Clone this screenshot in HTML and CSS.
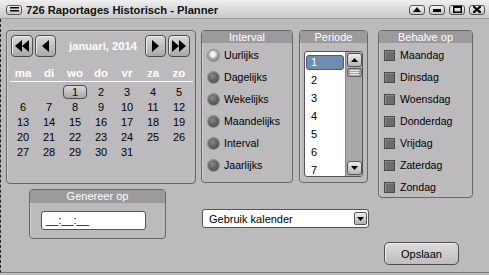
FILE: index.html
```html
<!DOCTYPE html>
<html>
<head>
<meta charset="utf-8">
<link rel="stylesheet" href="styles.css">
</head>
<body>
<div class="window">
  <div class="titlebar">
    <span class="tbtn"><svg width="9" height="5" viewBox="0 0 9 5"><rect x="0" y="0" width="9" height="1.5" fill="#000"/><rect x="0" y="3" width="9" height="1.5" fill="#000"/></svg></span>
    <span class="title">726 Raportages Historisch - Planner</span>
    <span class="tright">
      <span class="tbtn"><svg width="8" height="5" viewBox="0 0 8 5"><path d="M0 5 L4 0 L8 5 Z" fill="#000"/></svg></span>
      <span class="tbtn"><svg width="8" height="5" viewBox="0 0 8 5"><rect x="0" y="2" width="8" height="3" fill="#000"/></svg></span>
      <span class="tbtn"><svg width="9" height="7" viewBox="0 0 9 7"><rect x="0.75" y="0.75" width="7.5" height="5.5" fill="none" stroke="#000" stroke-width="1.5"/><rect x="0" y="0" width="9" height="2" fill="#000"/></svg></span>
      <span class="tbtn"><svg width="8" height="7" viewBox="0 0 8 7"><path d="M0 0 L8 7 M8 0 L0 7" stroke="#000" stroke-width="2.2"/></svg></span>
    </span>
  </div>
  <div class="content">
    <div class="col col-left">
      <div class="panel calendar">
        <div class="cal-nav">
          <span class="navbtn"><svg width="14" height="12" viewBox="0 0 14 12"><path d="M7 0 L0 6 L7 12 Z M14 0 L7 6 L14 12 Z" fill="#000"/></svg></span>
          <span class="navbtn small"><svg width="7" height="12" viewBox="0 0 7 12"><path d="M7 0 L0 6 L7 12 Z" fill="#000"/></svg></span>
          <span class="month">januari, 2014</span>
          <span class="navbtn small"><svg width="7" height="12" viewBox="0 0 7 12"><path d="M0 0 L7 6 L0 12 Z" fill="#000"/></svg></span>
          <span class="navbtn"><svg width="14" height="12" viewBox="0 0 14 12"><path d="M0 0 L7 6 L0 12 Z M7 0 L14 6 L7 12 Z" fill="#000"/></svg></span>
        </div>
        <div class="cal-head">
          <span>ma</span><span>di</span><span>wo</span><span>do</span><span>vr</span><span>za</span><span>zo</span>
        </div>
        <div class="cal-grid">
          <span></span><span></span><span class="sel">1</span><span>2</span><span>3</span><span>4</span><span>5</span>
          <span>6</span><span>7</span><span>8</span><span>9</span><span>10</span><span>11</span><span>12</span>
          <span>13</span><span>14</span><span>15</span><span>16</span><span>17</span><span>18</span><span>19</span>
          <span>20</span><span>21</span><span>22</span><span>23</span><span>24</span><span>25</span><span>26</span>
          <span>27</span><span>28</span><span>29</span><span>30</span><span>31</span>
        </div>
      </div>
      <div class="panel genereer">
        <div class="phead">Genereer op</div>
        <div class="timeinput">__:__:__</div>
      </div>
    </div>
    <div class="col col-mid">
      <div class="midrow">
        <div class="panel interval">
          <div class="phead">Interval</div>
          <div class="opt"><span class="radio on"></span>Uurlijks</div>
          <div class="opt"><span class="radio"></span>Dagelijks</div>
          <div class="opt"><span class="radio"></span>Wekelijks</div>
          <div class="opt"><span class="radio"></span>Maandelijks</div>
          <div class="opt"><span class="radio"></span>Interval</div>
          <div class="opt"><span class="radio"></span>Jaarlijks</div>
        </div>
        <div class="panel periode">
          <div class="phead">Periode</div>
          <div class="listbox">
            <div class="items">
              <div class="item"><span class="isel">1</span></div>
              <div class="item">2</div>
              <div class="item">3</div>
              <div class="item">4</div>
              <div class="item">5</div>
              <div class="item">6</div>
              <div class="item">7</div>
            </div>
            <div class="scrollbar">
              <span class="sbtn"><svg width="7" height="4" viewBox="0 0 7 4"><path d="M0 4 L3.5 0 L7 4 Z" fill="#000"/></svg></span>
              <span class="thumb"><svg width="9" height="5" viewBox="0 0 9 5"><path d="M0 0.5 H9 M0 2.5 H9 M0 4.5 H9" stroke="#eee" stroke-width="1"/></svg></span>
              <span class="track"></span>
              <span class="sbtn"><svg width="7" height="4" viewBox="0 0 7 4"><path d="M0 0 L3.5 4 L7 0 Z" fill="#000"/></svg></span>
            </div>
          </div>
        </div>
      </div>
      <div class="dropdown">
        <span class="ddtext">Gebruik kalender</span>
        <span class="ddbtn"><svg width="7" height="4" viewBox="0 0 7 4"><path d="M0 0 L3.5 4 L7 0 Z" fill="#000"/></svg></span>
      </div>
    </div>
    <div class="col col-right">
      <div class="panel behalve">
        <div class="phead">Behalve op</div>
        <div class="opt"><span class="check"></span>Maandag</div>
        <div class="opt"><span class="check"></span>Dinsdag</div>
        <div class="opt"><span class="check"></span>Woensdag</div>
        <div class="opt"><span class="check"></span>Donderdag</div>
        <div class="opt"><span class="check"></span>Vrijdag</div>
        <div class="opt"><span class="check"></span>Zaterdag</div>
        <div class="opt"><span class="check"></span>Zondag</div>
      </div>
      <button class="savebtn">Opslaan</button>
    </div>
  </div>
</div>
</body>
</html>
```
FILE: styles.css
```css
* { box-sizing: border-box; }
html, body { margin: 0; padding: 0; }
body {
  background: #bcbabd;
  font-family: "Liberation Sans", Arial, sans-serif;
  font-size: 11px;
  color: #000;
}
.window {
  width: 489px;
  height: 275px;
  overflow: hidden;
  display: flex;
  flex-direction: column;
}
.titlebar {
  height: 19px;
  flex: none;
  display: flex;
  align-items: center;
  padding: 1px 4px 0 6px;
  background: linear-gradient(#efefef, #dcdcdc 50%, #c9c9c9);
  border-bottom: 1px solid #9a9a9a;
}
.title {
  font-weight: bold;
  font-size: 11.2px;
  margin-left: 4px;
  color: #111;
}
.tright { margin-left: auto; display: flex; gap: 4px; }
.tbtn {
  width: 16px;
  height: 10px;
  border: 1px solid #555;
  border-radius: 3px;
  background: linear-gradient(#f4f4f4, #c4c4c4);
  display: flex;
  align-items: center;
  justify-content: center;
}
.content {
  flex: 1;
  display: flex;
  align-items: flex-start;
  padding: 11px 0 0 6px;
  border-left: 1px dashed #222;
  border-bottom: 1px solid #7a7a7a;
  margin-bottom: 2px;
}
.col { display: flex; flex-direction: column; align-items: flex-start; }
.panel {
  border: 1px solid #686868;
  border-radius: 4px;
  box-shadow: inset 1px 1px 0 #d0ced1;
}
.phead {
  height: 12px;
  line-height: 12px;
  background: #9c9a9d;
  color: #fff;
  text-align: center;
  font-size: 11px;
  border-radius: 3px 3px 0 0;
}
/* calendar */
.calendar {
  width: 190px;
  height: 154px;
  margin-left: -1px;
  padding: 4px 3px 0 3px;
}
.cal-nav { display: flex; align-items: center; height: 22px; margin-left: 1px; }
.navbtn {
  width: 22px;
  height: 22px;
  border: 1px solid #4d4d4d;
  border-radius: 4px;
  background: linear-gradient(#d9d9d9, #a9a9a9);
  box-shadow: inset 1px 1px 0 #eee;
  display: flex;
  align-items: center;
  justify-content: center;
  margin-right: 2px;
}
.navbtn.small { width: 21px; }
.month {
  flex: 1;
  text-align: center;
  color: #fff;
  font-weight: bold;
  font-size: 11.2px;
  padding-left: 5px;
  margin-right: 2px;
}
.cal-head {
  display: grid;
  grid-template-columns: repeat(7, 26px);
  margin-top: 9px;
  height: 16px;
  line-height: 14px;
  border-bottom: 1px solid #fff;
  color: #fff;
  font-weight: bold;
  font-size: 11.5px;
  width: 183px;
  text-align: center;
}
.cal-grid {
  display: grid;
  grid-template-columns: repeat(7, 26px);
  grid-auto-rows: 15px;
  margin-top: 3px;
  text-align: center;
  font-size: 11px;
  line-height: 15px;
}
.cal-grid .sel {
  margin: 0 1px 1px 1px;
  line-height: 12px;
  border: 1px solid #4d4d4d;
  border-radius: 4px;
  background: linear-gradient(#d8d8d8, #a8a8a8);
}
/* genereer */
.genereer {
  width: 137px;
  height: 50px;
  margin: 5px 0 0 22px;
}
.genereer .phead { height: 13px; }
.timeinput {
  width: 105px;
  height: 19px;
  margin: 8px 0 0 11px;
  background: #fff;
  border: 1px solid #555;
  border-radius: 3px;
  padding: 0 0 0 4px;
  line-height: 16px;
  font-size: 11px;
}
/* mid */
.col-mid { margin-left: 5px; }
.midrow { display: flex; align-items: flex-start; }
.interval { width: 92px; height: 153px; }
.opt {
  height: 22px;
  display: flex;
  align-items: center;
  font-size: 10.6px;
}
.interval .phead + .opt, .behalve .phead + .opt { margin-top: 1px; }
.radio {
  width: 11px;
  height: 11px;
  border-radius: 50%;
  margin: 0 5px 0 6px;
  background: radial-gradient(circle at 40% 35%, #8a8a8a, #5a5a5a 60%, #3e3e3e);
  box-shadow: 0 0 0 1px #8c8c8c;
}
.radio.on {
  background: radial-gradient(circle at 45% 40%, #ffffff 0, #f0f0f0 25%, #9a9a9a 55%, #5a5a5a);
}
.periode { width: 69px; height: 153px; margin-left: 6px; }
.listbox {
  width: 59px;
  height: 126px;
  margin: 8px 0 0 4px;
  border: 1px solid #555;
  border-radius: 3px;
  background: #fff;
  display: flex;
  overflow: hidden;
  padding: 0;
}
.items { flex: 1; padding-top: 1px; }
.item {
  height: 18px;
  line-height: 18px;
  padding-left: 6px;
  font-size: 11px;
}
.item:first-child { padding-left: 1px; padding-top: 2px; height: 18px; line-height: 14px; }
.isel {
  display: block;
  width: 38px;
  height: 15px;
  background: #6f8db1;
  border: 1px solid #3e5a80;
  border-radius: 3px;
  color: #fff;
  padding-left: 4px;
  line-height: 13px;
}
.scrollbar {
  width: 17px;
  background: #a9a7aa;
  border-left: 1px solid #888;
  display: flex;
  flex-direction: column;
  align-items: center;
  padding: 1px 0 1px 0;
}
.sbtn {
  width: 15px;
  height: 14px;
  border: 1px solid #555;
  border-radius: 3px;
  background: linear-gradient(#eee, #b5b5b5);
  display: flex;
  align-items: center;
  justify-content: center;
}
.thumb {
  width: 15px;
  height: 9px;
  margin-top: 1px;
  border: 1px solid #666;
  border-radius: 2px;
  background: #a0a0a0;
  display: flex;
  align-items: center;
  justify-content: center;
}
.track { flex: 1; }
.dropdown {
  width: 167px;
  height: 19px;
  margin: 26px 0 0 1px;
  background: #fff;
  border: 1px solid #555;
  border-radius: 3px;
  display: flex;
  align-items: center;
  padding: 0 1px 0 6px;
}
.ddtext { flex: 1; font-size: 11px; }
.ddbtn {
  width: 13px;
  height: 13px;
  border: 1px solid #555;
  border-radius: 2px;
  background: linear-gradient(#eee, #b0b0b0);
  display: flex;
  align-items: center;
  justify-content: center;
}
/* right */
.col-right { margin-left: 9px; }
.behalve { width: 95px; height: 168px; }
.check {
  width: 11px;
  height: 11px;
  margin: 0 5px 0 5px;
  background: #6c6c6c;
  border: 1px solid #4a4a4a;
  box-shadow: inset 1px 1px 0 #8a8a8a;
}
.savebtn {
  width: 75px;
  height: 23px;
  margin: 44px 0 0 6px;
  border: 1px solid #4d4d4d;
  border-radius: 5px;
  background: linear-gradient(#dcdcdc, #bdbdbd);
  box-shadow: inset 1px 1px 0 #f0f0f0;
  font-family: "Liberation Sans", Arial, sans-serif;
  font-size: 11px;
  color: #000;
  padding: 0;
}
```
